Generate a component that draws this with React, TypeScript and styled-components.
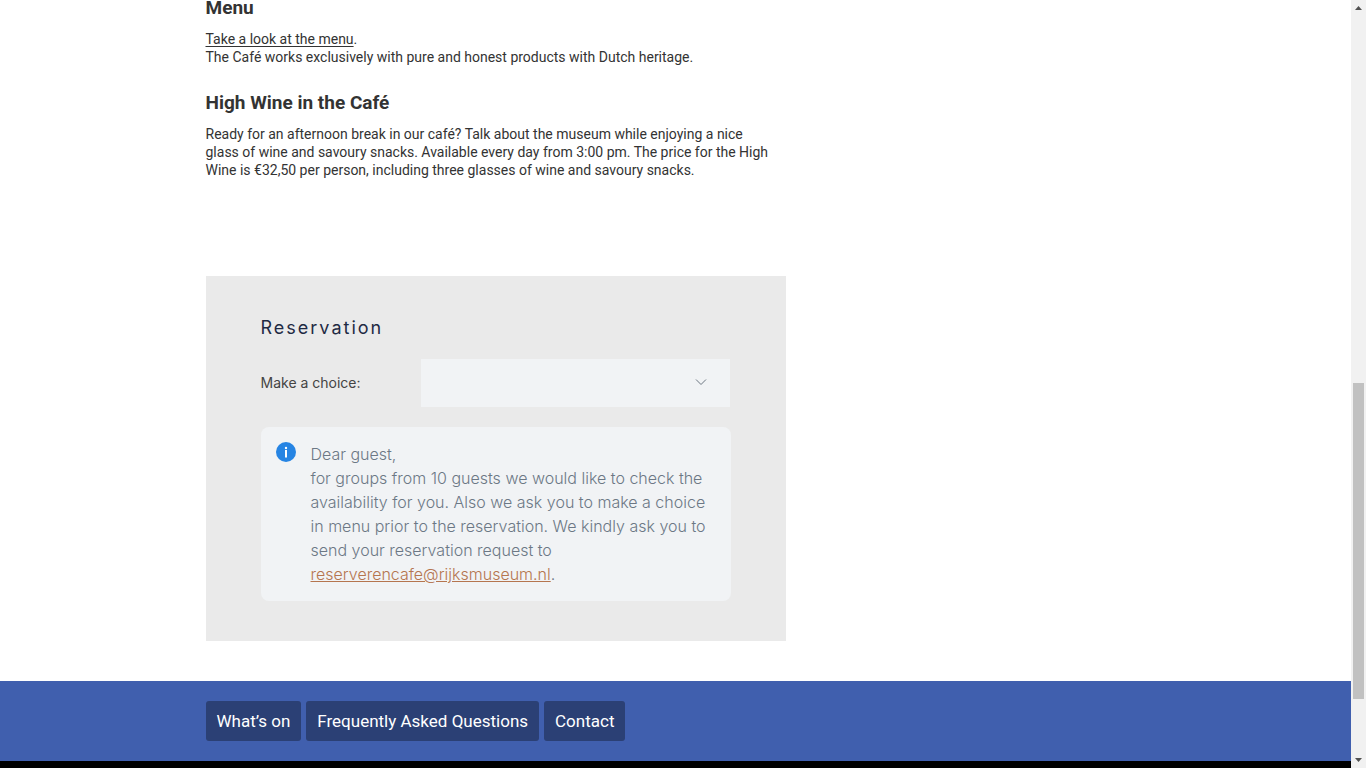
import React from "react";
import styled, { createGlobalStyle } from "styled-components";

const GlobalStyle = createGlobalStyle`
  * { box-sizing: border-box; }
  body { margin: 0; background: #fff; }
`;

const Viewport = styled.div`
  display: flex;
  height: 100vh;
  overflow: hidden;
  font-family: Roboto, "Liberation Sans", sans-serif;
  color: #333;
`;

const Page = styled.div`
  flex: 1;
  min-width: 0;
  display: flex;
  flex-direction: column;
`;

const Container = styled.div`
  width: 100%;
  max-width: 940px;
  margin: 0 auto;
`;

const Column = styled.main`
  max-width: 580px;
  margin-bottom: 40px;
`;

const Heading = styled.h2`
  margin: 0 0 14px;
  font-size: 19px;
  line-height: 16px;
  font-weight: 700;
  color: #333;
`;

const Paragraph = styled.p<{ $gap: number }>`
  margin: 0 0 ${(p) => p.$gap}px;
  font-size: 14px;
  line-height: 18px;
  white-space: nowrap;
`;

const TextLink = styled.a`
  color: inherit;
  text-decoration: underline;
  text-underline-offset: 2px;
`;

const ReservationForm = styled.form`
  padding: 40px 55px;
  background: #eaeaea;
  font-family: Inter, "Liberation Sans", sans-serif;
`;

const FormTitle = styled.h2`
  margin: 0 0 19px;
  font-size: 18px;
  line-height: 24px;
  font-weight: 400;
  letter-spacing: 2px;
  color: #1f2a44;
`;

const Field = styled.div`
  display: flex;
  align-items: center;
  margin: 0 1px 20px 0;
`;

const Label = styled.label`
  width: 160px;
  font-size: 14px;
  line-height: 20px;
  color: #444;
`;

const SelectBox = styled.div`
  position: relative;
  flex: 1;
`;

const Select = styled.select`
  display: block;
  width: 100%;
  height: 48px;
  border: 0;
  border-radius: 0;
  appearance: none;
  background: #f1f3f5;
`;

const Chevron = styled.svg`
  position: absolute;
  right: 23px;
  top: 18px;
  pointer-events: none;
`;

const Notice = styled.div`
  display: flex;
  gap: 15px;
  padding: 15px;
  border-radius: 8px;
  background: #f1f3f5;
`;

const InfoIcon = styled.svg`
  flex: none;
`;

const NoticeText = styled.p`
  margin: 0;
  font-size: 16px;
  font-weight: 300;
  line-height: 24px;
  color: #6c7885;
  white-space: nowrap;
`;

const MailLink = styled.a`
  color: #b5754f;
  text-decoration: underline;
`;

const QuickBar = styled.nav`
  padding: 20px 0;
  background: #405fae;
`;

const QuickLinks = styled.div`
  display: flex;
  gap: 5px;
`;

const QuickLink = styled.a`
  padding: 0 11px;
  border-radius: 3px;
  background: #2b4075;
  color: #fff;
  font-size: 17px;
  line-height: 40px;
  text-decoration: none;
  white-space: nowrap;
`;

const Footer = styled.footer`
  flex: 1;
  background: #000;
`;

const ScrollTrack = styled.div`
  width: 15px;
  flex: none;
  display: flex;
  flex-direction: column;
  align-items: center;
  background: #f1f1f1;
`;

const Arrow = styled.svg`
  flex: none;
`;

const ThumbArea = styled.div`
  flex: 1;
  width: 11px;
  display: grid;
  grid-template-rows: 368fr 316fr 54fr;
`;

const Thumb = styled.div`
  grid-row: 2;
  background: #c1c1c1;
`;

export default function App() {
  return (
    <>
      <GlobalStyle />
      <Viewport>
        <Page>
          <Container>
            <Column>
              <Heading>Menu</Heading>
              <Paragraph $gap={29}>
                <TextLink href="#menu">Take a look at the menu</TextLink>.
                <br />
                The Café works exclusively with pure and honest products with Dutch heritage.
              </Paragraph>
              <Heading>High Wine in the Café</Heading>
              <Paragraph $gap={97}>
                Ready for an afternoon break in our café? Talk about the museum while enjoying a nice
                <br />
                glass of wine and savoury snacks. Available every day from 3:00 pm. The price for the High
                <br />
                Wine is €32,50 per person, including three glasses of wine and savoury snacks.
              </Paragraph>
              <ReservationForm>
                <FormTitle>Reservation</FormTitle>
                <Field>
                  <Label htmlFor="choice">Make a choice:</Label>
                  <SelectBox>
                    <Select id="choice" defaultValue="">
                      <option value="" />
                    </Select>
                    <Chevron width="12" height="10" viewBox="0 0 12 10" fill="none" stroke="#6c7681">
                      <path d="M1 2.5 L6 7.5 L11 2.5" />
                    </Chevron>
                  </SelectBox>
                </Field>
                <Notice>
                  <InfoIcon width="20" height="20" viewBox="0 0 20 20" aria-hidden="true">
                    <circle cx="10" cy="10" r="10" fill="#2684e3" />
                    <circle cx="10" cy="6" r="1.2" fill="#fff" />
                    <rect x="9" y="8" width="2" height="7.5" fill="#fff" />
                  </InfoIcon>
                  <NoticeText>
                    Dear guest,
                    <br />
                    for groups from 10 guests we would like to check the
                    <br />
                    availability for you. Also we ask you to make a choice
                    <br />
                    in menu prior to the reservation. We kindly ask you to
                    <br />
                    send your reservation request to
                    <br />
                    <MailLink href="mailto:reserverencafe@rijksmuseum.nl">reserverencafe@rijksmuseum.nl</MailLink>.
                  </NoticeText>
                </Notice>
              </ReservationForm>
            </Column>
          </Container>
          <QuickBar>
            <Container>
              <QuickLinks>
                <QuickLink href="#whats-on">What’s on</QuickLink>
                <QuickLink href="#faq">Frequently Asked Questions</QuickLink>
                <QuickLink href="#contact">Contact</QuickLink>
              </QuickLinks>
            </Container>
          </QuickBar>
          <Footer />
        </Page>
        <ScrollTrack aria-hidden="true">
          <Arrow width="15" height="15" viewBox="0 0 15 15">
            <path d="M4 10 L7.5 6 L11 10 Z" fill="#505050" />
          </Arrow>
          <ThumbArea>
            <Thumb />
          </ThumbArea>
          <Arrow width="15" height="15" viewBox="0 0 15 15">
            <path d="M4 5 L7.5 9 L11 5 Z" fill="#505050" />
          </Arrow>
        </ScrollTrack>
      </Viewport>
    </>
  );
}
